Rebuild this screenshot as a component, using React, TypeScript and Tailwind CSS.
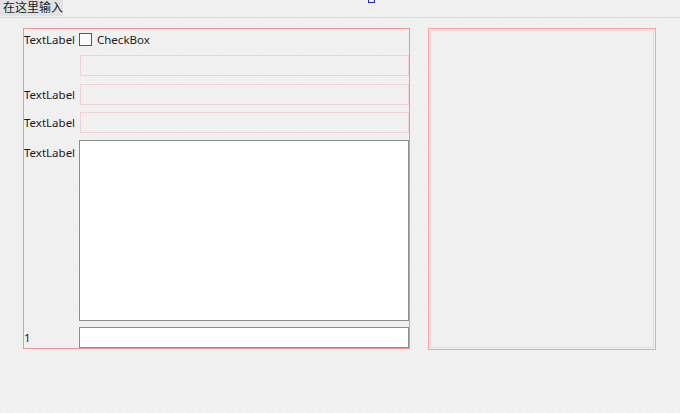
export default function App() {
  const font = { fontFamily: '"Noto Sans", "Noto Sans CJK SC", sans-serif' };
  return (
    <div
      className="relative w-[680px] h-[413px] bg-[#f0f0f0] text-[11.5px] text-[#1a1a1a] overflow-hidden"
      style={font}
    >
      {/* menu bar */}
      <div className="relative h-[18px] border-b border-[#dadada] flex">
        <div className="h-[16px] w-[63px] bg-[#e2e2e2] flex items-center pl-[3px] text-[12px] leading-none">
          在这里输入
        </div>
        <div className="absolute left-[368px] top-[-4px] w-[7px] h-[7px] border border-[#2020e0]" />
      </div>

      {/* form canvas */}
      <div className="h-[395px] bg-[radial-gradient(circle,#f7f7f7_0.6px,transparent_0.9px)] bg-size-[10px_10px] pt-[10px] pl-[23px] flex gap-[18px]">
        {/* left layout */}
        <div className="w-[387px] h-[321px] border border-[#f39494] flex flex-col">
          <div className="h-[21px] flex items-center">
            <div className="w-[55px] leading-none">TextLabel</div>
            <div className="w-[13px] h-[13px] border border-[#5a5a5a] bg-[#fafafa]" />
            <div className="ml-[5px] leading-none">CheckBox</div>
          </div>
          <div className="mt-[5px] h-[21px] flex">
            <div className="w-[56px]" />
            <div className="flex-1 border border-[#f2d2d2]" />
          </div>
          <div className="mt-[8px] h-[21px] flex items-center">
            <div className="w-[56px] leading-none">TextLabel</div>
            <div className="flex-1 h-full border border-[#f2d2d2]" />
          </div>
          <div className="mt-[7px] h-[21px] flex items-center">
            <div className="w-[56px] leading-none">TextLabel</div>
            <div className="flex-1 h-full border border-[#f2d2d2]" />
          </div>
          <div className="mt-[7px] h-[181px] flex">
            <div className="w-[55px] pt-[7px] leading-none">TextLabel</div>
            <div className="flex-1 bg-white border border-[#8e8e8e]" />
          </div>
          <div className="mt-[6px] h-[21px] flex items-center">
            <div className="w-[55px] leading-none">1</div>
            <div className="flex-1 h-full bg-white border border-[#8e8e8e]" />
          </div>
        </div>

        {/* right layout */}
        <div className="w-[228px] h-[322px] border border-[#f5a3a3] p-[1px]">
          <div className="w-full h-full border border-[#f8d4d4]" />
        </div>
      </div>
    </div>
  );
}
